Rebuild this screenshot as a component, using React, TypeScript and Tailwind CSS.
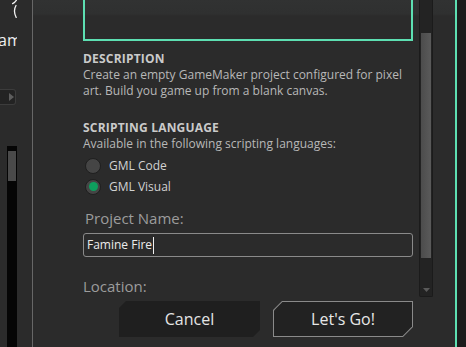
import * as React from "react";

const GREEN = "bg-[#5ddfb2]";

function LeftRail() {
  return (
    <div className="flex w-[32px] shrink-0">
      <div className="flex w-[17px] flex-col overflow-hidden">
        <svg width="17" height="18" viewBox="0 0 17 18" fill="none" stroke="#f2f2f2" strokeWidth="1.3" strokeLinecap="round">
          <path d="M16.5 0 C15.5 1.6 14.2 2.8 12.6 3.6" />
          <path d="M16 5.5 C14.2 8.5 14.2 13.5 16.2 17.5" />
        </svg>
        <div className="-ml-[2px] mt-[10px] h-[24px] whitespace-nowrap text-[16px] leading-[24px] text-[#f0f0f0]">am</div>
        <div className="mt-[37px] flex h-[16px] w-[16px] items-center justify-end rounded-r-[3px] border border-l-0 border-[#3c3c3c] bg-[#232323] pr-[1px]">
          <svg width="5" height="8" viewBox="0 0 5 8">
            <path d="M0 0 L5 4 L0 8 Z" fill="#5e5e5e" />
          </svg>
        </div>
        <div className="ml-[7px] mt-[41px] flex w-[10px] flex-1 flex-col bg-[#050505]">
          <div className="mx-px mt-[5px] h-[30px] bg-[#4a4a4a]" />
        </div>
      </div>
    </div>
  );
}

function Radio({ label, checked }: { label: string; checked?: boolean }) {
  return (
    <div className="flex h-[21px] items-center pl-[2px]">
      <span className="flex h-[16px] w-[16px] items-center justify-center rounded-full border border-[#1f1f1f] bg-[#454545]">
        {checked && <span className="h-[9px] w-[9px] rounded-full bg-[#0e9f5e]" />}
      </span>
      <span className="ml-[8px] text-[12px] leading-[16px] text-[#d2d2d2]">{label}</span>
    </div>
  );
}

function Scrollbar() {
  return (
    <div className="ml-[6px] flex h-[297px] w-[14px] flex-col rounded-b-[2px] border border-t-0 border-[#1b1b1b] bg-[#232323]">
      <div className="mx-px mt-[33px] h-[225px] bg-gradient-to-r from-[#4c4c4c] to-[#5a5a5a]" />
      <div className="flex flex-1 items-end justify-center pb-[4px]">
        <svg width="7" height="4" viewBox="0 0 7 4">
          <path d="M0 0 L7 0 L3.5 4 Z" fill="#5a5a5a" />
        </svg>
      </div>
    </div>
  );
}

export default function App() {
  return (
    <div className="flex h-[347px] w-[466px] overflow-hidden bg-[#2b2b2b] font-['Open_Sans',sans-serif]">
      <LeftRail />
      <div className="w-px shrink-0 bg-[#676767]" />
      <div className="flex w-[422px] shrink-0 flex-col bg-[linear-gradient(to_bottom,#313232_0px,#2f3030_14px,#2b2b2b_16px)]">
        <div className="flex h-[297px]">
          <div className="ml-[50px] flex w-[330px] flex-col">
            <div className="h-[41px] border-x-2 border-b-2 border-[#5ddfb2]" />
            <div className="mt-[10px] text-[12px] font-bold leading-[16px] tracking-[0.2px] text-[#cacaca]">DESCRIPTION</div>
            <p className="text-[12px] leading-[16px] text-[#b8b8b8]">
              Create an empty GameMaker project configured for pixel art. Build you game up from a blank canvas.
            </p>
            <div className="mt-[21px] text-[12px] font-bold leading-[16px] tracking-[0.2px] text-[#cacaca]">SCRIPTING LANGUAGE</div>
            <div className="text-[12px] leading-[16px] text-[#b8b8b8]">Available in the following scripting languages:</div>
            <div className="mt-[3px] flex flex-col">
              <Radio label="GML Code" />
              <Radio label="GML Visual" checked />
            </div>
            <div className="mt-[11px] pl-[2px] text-[15px] leading-[20px] text-[#9c9c9c]">Project Name:</div>
            <div className="mt-[5px] flex h-[24px] items-center rounded-[3px] border border-[#8a8a8a] px-[3px]">
              <span className="text-[12px] leading-[16px] text-[#ececec]">Famine Fire</span>
              <span className="ml-px h-[17px] w-px bg-[#f0f0f0]" />
            </div>
            <div className="mt-[19px] text-[15px] leading-[20px] text-[#9c9c9c]">Location:</div>
          </div>
          <Scrollbar />
        </div>
        <div className="flex justify-end gap-[13px] pr-[42px] pt-[4px]">
          <button className="flex h-[36px] w-[141px] items-center justify-center bg-[#1f1f1f] text-[16px] text-[#e4e4e4] [clip-path:polygon(7px_0,100%_0,100%_calc(100%_-_7px),calc(100%_-_7px)_100%,0_100%,0_7px)]">
            Cancel
          </button>
          <button className="h-[36px] w-[140px] bg-[#8a8a8a] p-px [clip-path:polygon(9px_0,100%_0,100%_calc(100%_-_10px),calc(100%_-_10px)_100%,0_100%,0_9px)]">
            <span className="flex h-full w-full items-center justify-center bg-[#222222] text-[16px] text-[#e8e8e8] [clip-path:polygon(8.4px_0,100%_0,100%_calc(100%_-_9.4px),calc(100%_-_9.4px)_100%,0_100%,0_8.4px)]">
              Let's Go!
            </span>
          </button>
        </div>
      </div>
      <div className={`w-[2px] shrink-0 ${GREEN}`} />
      <div className="flex-1 bg-[#1c1c1c]" />
    </div>
  );
}
